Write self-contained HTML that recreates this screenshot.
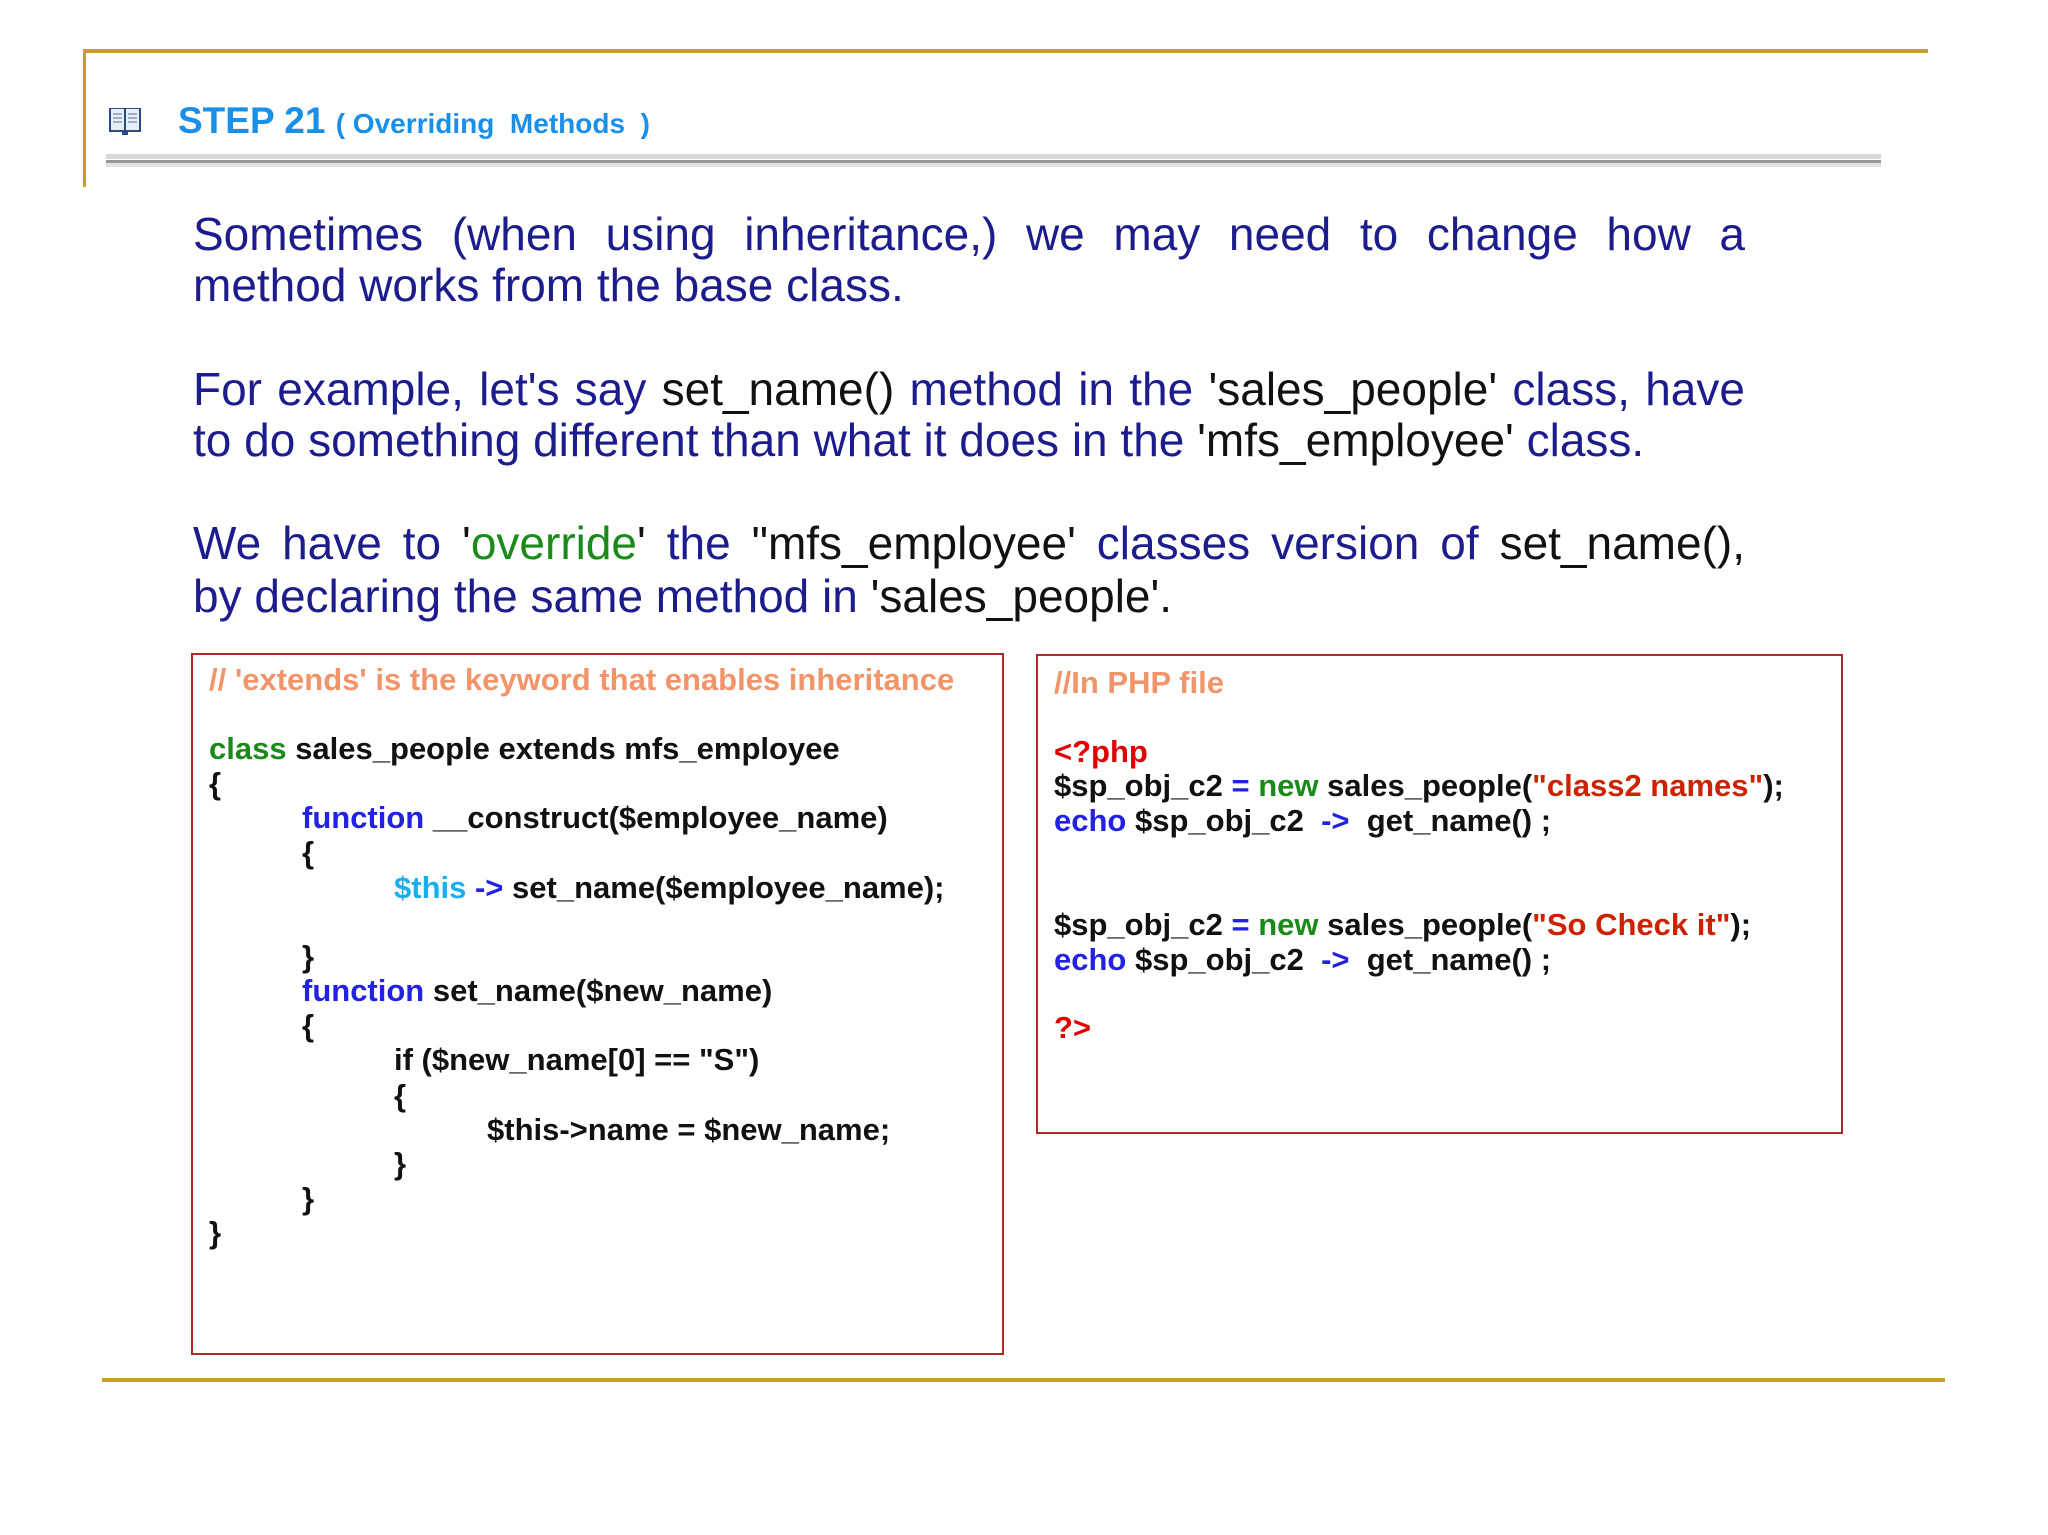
<!DOCTYPE html>
<html><head><meta charset="utf-8"><style>
body{margin:0;width:2048px;height:1535px;background:#fff;position:relative;overflow:hidden;font-family:"Liberation Sans",sans-serif}
.a{position:absolute;white-space:pre}
.p{position:absolute;left:193px;width:1552px;font-size:46px;color:#1c1c8c;line-height:52px;text-align:justify;text-align-last:justify}
.q{position:absolute;left:193px;font-size:46px;color:#1c1c8c;line-height:52px;white-space:pre}
.c{position:absolute;font-size:31px;font-weight:bold;color:#111;line-height:34px;white-space:pre}
.g{color:#1a8a1a}.b{color:#2222e0}.cy{color:#1aaeef}.r{color:#e00000}.s{color:#cc2200}.o{color:#f2946a}
</style></head><body>
<div class="a" style="left:84px;top:49px;width:1844px;height:4px;background:#c9a020"></div>
<div class="a" style="left:83px;top:49px;width:3px;height:138px;background:#c9a020"></div>
<div class="a" style="left:106px;top:154px;width:1775px;height:5px;background:#d8d8d8"></div>
<div class="a" style="left:106px;top:160px;width:1775px;height:3px;background:#999"></div>
<div class="a" style="left:106px;top:163px;width:1775px;height:4px;background:#e4e4e4"></div>
<svg class="a" style="left:108px;top:106px" width="34" height="30" viewBox="0 0 34 30"><rect x="1" y="2" width="32" height="24" fill="#2a4a80"/><rect x="3" y="3" width="13" height="21" fill="#e8eef6"/><rect x="18" y="3" width="13" height="21" fill="#e8eef6"/><g stroke="#8899bb" stroke-width="1.5"><line x1="5" y1="8" x2="14" y2="8"/><line x1="5" y1="12" x2="14" y2="12"/><line x1="5" y1="16" x2="14" y2="16"/><line x1="20" y1="8" x2="29" y2="8"/><line x1="20" y1="12" x2="29" y2="12"/><line x1="20" y1="16" x2="29" y2="16"/></g><rect x="14" y="26" width="6" height="3" fill="#2a4a80"/></svg>
<div class="a" style="left:178px;top:100px;font-size:37px;font-weight:bold;color:#1a8fe8">STEP 21 <span style="font-size:28px">( Overriding  Methods  )</span></div>

<div class="p" style="top:208px">Sometimes (when using inheritance,) we may need to change how a</div>
<div class="q" style="top:259px">method works from the base class.</div>
<div class="p" style="top:363px">For example, let's say <span style="color:#111">set_name()</span> method in the <span style="color:#111">'sales_people'</span> class, have</div>
<div class="q" style="top:414px">to do something different than what it does in the <span style="color:#111">'mfs_employee'</span> class.</div>
<div class="p" style="top:517px">We have to  <span style="color:#111">'</span><span class="g">override</span><span style="color:#111">'</span> the <span style="color:#111">"mfs_employee'</span> classes version of <span style="color:#111">set_name(),</span></div>
<div class="q" style="top:570px">by declaring the same method in <span style="color:#111">'sales_people'.</span></div>

<div class="a" style="left:191px;top:653px;width:809px;height:698px;border:2px solid #b02828"></div>
<div class="a" style="left:1036px;top:654px;width:803px;height:476px;border:2px solid #b02828"></div>

<div class="c o" style="left:209px;top:663px">// 'extends' is the keyword that enables inheritance</div>
<div class="c" style="left:209px;top:732px"><span class="g">class</span> sales_people extends mfs_employee</div>
<div class="c" style="left:209px;top:767px">{</div>
<div class="c" style="left:302px;top:801px"><span class="b">function</span> __construct($employee_name)</div>
<div class="c" style="left:302px;top:836px">{</div>
<div class="c" style="left:394px;top:871px"><span class="cy">$this</span> <span class="b">-&gt;</span> set_name($employee_name);</div>
<div class="c" style="left:302px;top:940px">}</div>
<div class="c" style="left:302px;top:974px"><span class="b">function</span> set_name($new_name)</div>
<div class="c" style="left:302px;top:1009px">{</div>
<div class="c" style="left:394px;top:1043px">if ($new_name[0] == "S")</div>
<div class="c" style="left:394px;top:1079px">{</div>
<div class="c" style="left:487px;top:1113px">$this-&gt;name = $new_name;</div>
<div class="c" style="left:394px;top:1147px">}</div>
<div class="c" style="left:302px;top:1182px">}</div>
<div class="c" style="left:209px;top:1216px">}</div>

<div class="c o" style="left:1054px;top:666px">//In PHP file</div>
<div class="c r" style="left:1054px;top:735px">&lt;?php</div>
<div class="c" style="left:1054px;top:769px">$sp_obj_c2 <span class="b">=</span> <span class="g">new</span> sales_people(<span class="s">"class2 names"</span>);</div>
<div class="c" style="left:1054px;top:804px"><span class="b">echo</span> $sp_obj_c2  <span class="b">-&gt;</span>  get_name() ;</div>
<div class="c" style="left:1054px;top:908px">$sp_obj_c2 <span class="b">=</span> <span class="g">new</span> sales_people(<span class="s">"So Check it"</span>);</div>
<div class="c" style="left:1054px;top:943px"><span class="b">echo</span> $sp_obj_c2  <span class="b">-&gt;</span>  get_name() ;</div>
<div class="c r" style="left:1054px;top:1011px">?&gt;</div>

<div class="a" style="left:102px;top:1378px;width:1843px;height:4px;background:#c9a020"></div>
</body></html>
